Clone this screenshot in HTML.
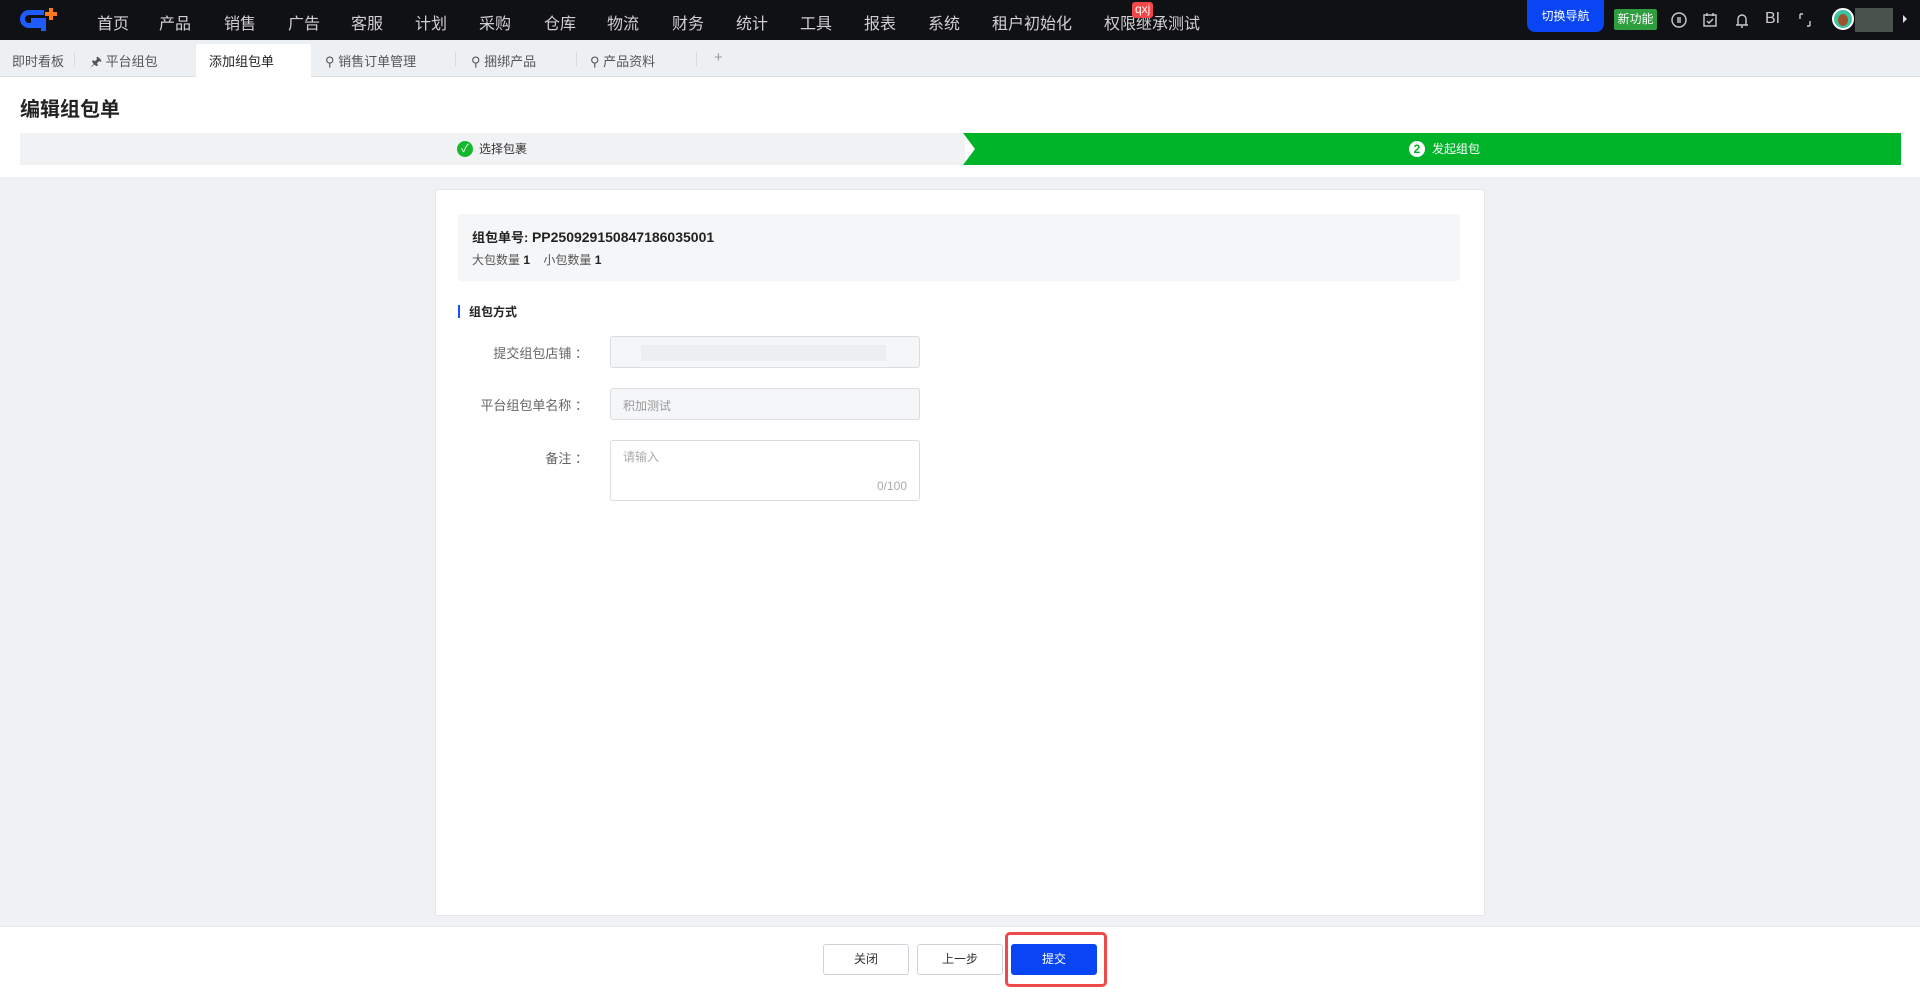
<!DOCTYPE html>
<html><head><meta charset="utf-8"><style>
*{margin:0;padding:0;box-sizing:border-box}
body{width:1920px;height:992px;background:#f0f1f3;font-family:"Liberation Sans","Noto Sans CJK SC",sans-serif;position:relative;overflow:hidden;color:#222}
.a{position:absolute;white-space:nowrap}
.nav{left:0;top:0;width:1920px;height:40px;background:#101114}
.ni{top:10px;font-size:16px;color:#d0d0d0}
.tabs{left:0;top:40px;width:1920px;height:37px;background:#edf0f3;border-bottom:1px solid #dcdfe4}
.t{top:51px;font-size:13px;color:#555}
.sep{top:52px;width:1px;height:14px;background:#d8dbe0}
.lab{font-size:13px;color:#666;text-align:right;width:190px;left:398px}
.box{left:610px;width:310px;border:1px solid #d9dce1;border-radius:3px}
.btn{top:944px;height:31px;border:1px solid #cfd3d9;border-radius:3px;background:#fff;font-size:12px;text-align:center;line-height:29px;color:#333}
</style></head><body>
<div class="a nav"></div>
<svg class="a" style="left:18px;top:7px" width="40" height="26" viewBox="0 0 40 26"><path d="M26 3H11a9 9 0 0 0 0 18h13v-10h-11v5h6v0h-8a4 4 0 0 1 0-8h15z" fill="#1f5bff"/><path d="M31 1h4v4h4v4h-4v4h-4V9h-4V5h4z" fill="#ff7a1a"/><path d="M23 11h5v13h-5z" fill="#1f5bff"/></svg>
<div class="a ni" style="left:97px">首页</div><div class="a ni" style="left:159px">产品</div><div class="a ni" style="left:224px">销售</div><div class="a ni" style="left:288px">广告</div><div class="a ni" style="left:351px">客服</div><div class="a ni" style="left:415px">计划</div><div class="a ni" style="left:479px">采购</div><div class="a ni" style="left:544px">仓库</div><div class="a ni" style="left:607px">物流</div><div class="a ni" style="left:672px">财务</div><div class="a ni" style="left:736px">统计</div><div class="a ni" style="left:800px">工具</div><div class="a ni" style="left:864px">报表</div><div class="a ni" style="left:928px">系统</div><div class="a ni" style="left:992px">租户初始化</div><div class="a ni" style="left:1104px">权限继承测试</div>
<div class="a" style="left:1132px;top:2px;height:16px;padding:0 3px;background:#f04848;color:#fff;font-size:12px;line-height:15px;border-radius:3px">qxj</div>
<div class="a" style="left:1527px;top:0;width:77px;height:32px;background:#0a45f5;border-radius:0 0 8px 8px;color:#fff;font-size:12px;text-align:center;line-height:32px">切换导航</div>
<div class="a" style="left:1614px;top:9px;width:43px;height:21px;background:#2e9e3e;color:#fff;font-size:12px;text-align:center;line-height:21px;border-radius:2px">新功能</div>
<svg class="a" style="left:1670px;top:11px" width="160" height="18" viewBox="0 0 160 18" fill="none" stroke="#ccc" stroke-width="1.4"><circle cx="9" cy="9" r="7"/><path d="M8 6v6M10 6v6"/><rect x="34" y="4" width="12" height="11"/><path d="M37 2v3M43 2v3M37 10l2 2 4-4"/><path d="M66 14h12M68 14V8a4 4 0 0 1 8 0v6M71 16h2"/><path d="M130 3v5M130 3h3M140 15v-5M140 15h-3"/></svg>
<div class="a" style="left:1765px;top:10px;color:#ccc;font-size:16px">BI</div>
<div class="a" style="left:1832px;top:8px;width:22px;height:22px;border-radius:50%;background:#3cc3a0;border:2px solid #fff"><div style="margin:4px auto;width:10px;height:12px;border-radius:50%;background:#a0522d"></div></div>
<div class="a" style="left:1855px;top:8px;width:38px;height:24px;background:#4a524d"></div>
<div class="a" style="left:1903px;top:15px;width:0;height:0;border-left:4px solid #ddd;border-top:4px solid transparent;border-bottom:4px solid transparent"></div>

<div class="a tabs"></div>
<div class="a" style="left:196px;top:44px;width:115px;height:34px;background:#fff;border-radius:3px 3px 0 0"></div>
<div class="a t" style="left:12px">即时看板</div><div class="a sep" style="left:74px"></div>
<div class="a t" style="left:90px">🖈 平台组包</div>
<div class="a t" style="left:209px;color:#222">添加组包单</div>
<div class="a t" style="left:325px">⚲ 销售订单管理</div><div class="a sep" style="left:455px"></div>
<div class="a t" style="left:471px">⚲ 捆绑产品</div><div class="a sep" style="left:576px"></div>
<div class="a t" style="left:590px">⚲ 产品资料</div><div class="a sep" style="left:696px"></div>
<div class="a t" style="left:714px;color:#999;font-size:15px;top:49px">+</div>

<div class="a" style="left:0;top:77px;width:1920px;height:100px;background:#fff"></div>
<div class="a" style="left:20px;top:93px;font-size:20px;font-weight:bold;color:#222">编辑组包单</div>
<div class="a" style="left:20px;top:133px;width:945px;height:32px;background:#f1f2f4"></div>
<div class="a" style="left:457px;top:141px;width:16px;height:16px;border-radius:50%;background:#15b82c;color:#fff;font-size:11px;text-align:center;line-height:16px">✓</div>
<div class="a" style="left:479px;top:140px;font-size:12px;color:#333">选择包裹</div>
<svg class="a" style="left:963px;top:133px" width="938" height="32"><polygon points="0,0 938,0 938,32 0,32 12,16" fill="#00b42a"/></svg>
<div class="a" style="left:1409px;top:141px;width:16px;height:16px;border-radius:50%;background:#fff;color:#00b42a;font-size:12px;font-weight:bold;text-align:center;line-height:16px">2</div>
<div class="a" style="left:1432px;top:140px;font-size:12px;color:#fff">发起组包</div>

<div class="a" style="left:435px;top:189px;width:1050px;height:727px;background:#fff;border:1px solid #e3e5e8;border-radius:3px"></div>
<div class="a" style="left:458px;top:214px;width:1002px;height:67px;background:#f5f6f8;border-radius:3px"></div>
<div class="a" style="left:472px;top:227px;font-size:13px;font-weight:bold;color:#222">组包单号: <span style="font-size:14px">PP25092915084718603500​1</span></div>
<div class="a" style="left:472px;top:251px;font-size:12px;color:#555">大包数量 <b style="color:#222">1</b>&nbsp;&nbsp;&nbsp;&nbsp;小包数量 <b style="color:#222">1</b></div>
<div class="a" style="left:458px;top:305px;width:2px;height:13px;background:#1650ff"></div>
<div class="a" style="left:469px;top:303px;font-size:12px;font-weight:bold;color:#222">组包方式</div>
<div class="a lab" style="top:343px">提交组包店铺 ：</div>
<div class="a box" style="top:336px;height:32px;background:#f5f6f8"><div style="margin:8px 30px;height:16px;background:#eceef1;width:245px"></div></div>
<div class="a lab" style="top:395px">平台组包单名称 ：</div>
<div class="a box" style="top:388px;height:32px;background:#f5f6f8;font-size:12px;color:#999;padding:8px 12px">积加测试</div>
<div class="a lab" style="top:448px">备注 ：</div>
<div class="a box" style="top:440px;height:61px;background:#fff;font-size:12px;color:#aaa;padding:7px 12px">请输入<div style="position:absolute;right:12px;bottom:7px">0/100</div></div>

<div class="a" style="left:0;top:926px;width:1920px;height:66px;background:#fff;border-top:1px solid #e6e8eb"></div>
<div class="a btn" style="left:823px;width:86px">关闭</div>
<div class="a btn" style="left:917px;width:86px">上一步</div>
<div class="a" style="left:1005px;top:932px;width:102px;height:55px;border:3px solid #ef4a4a;border-radius:5px"></div>
<div class="a btn" style="left:1011px;width:86px;background:#0a45f5;border-color:#0a45f5;color:#fff">提交</div>
</body></html>
